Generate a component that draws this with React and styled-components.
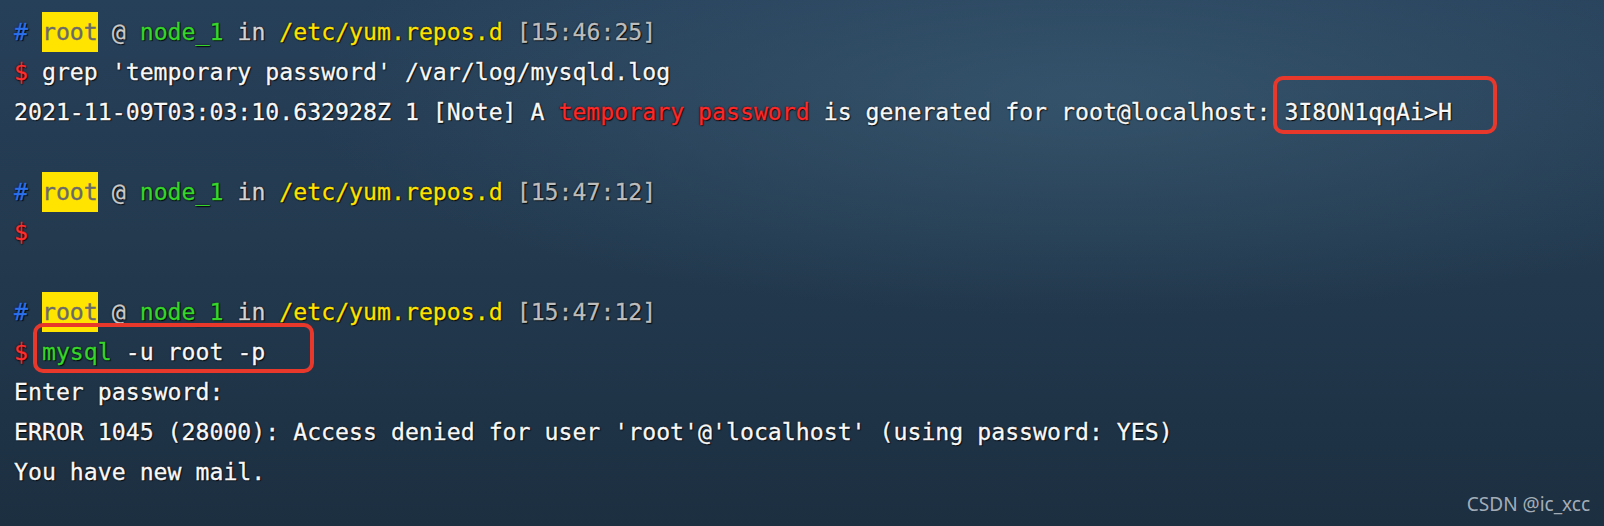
import styled, { createGlobalStyle } from "styled-components";

const Global = createGlobalStyle`
  html, body {
    margin: 0;
    padding: 0;
    background: #1e3245;
  }
`;

const Screen = styled.div`
  position: relative;
  width: 1604px;
  height: 526px;
  overflow: hidden;
  box-sizing: border-box;
  padding: 12px 0 0 14px;
  background:
    radial-gradient(ellipse 70% 60% at 68% 18%, rgba(64, 100, 124, 0.55), rgba(64, 100, 124, 0) 70%),
    linear-gradient(180deg, #27405a 0%, #233a4f 45%, #1c2f41 100%);
  font-family: "DejaVu Sans Mono", "Liberation Mono", monospace;
  font-size: 23.2px;
  color: #f8f8f8;
  text-shadow: 0 0 2px rgba(0, 0, 0, 0.95), 1px 1px 1px rgba(0, 0, 0, 0.85);
  -webkit-text-stroke: 0.3px currentColor;
`;

const Line = styled.div`
  height: 40px;
  line-height: 40px;
  white-space: pre;
`;

const C = styled.span`
  color: ${(p) => p.$c || "#f8f8f8"};
`;

const Hl = styled.span`
  display: inline-block;
  height: 40px;
  background: #ffe400;
  color: #6a6a6a;
  text-shadow: none;
`;

const Boxed = styled.span`
  position: relative;
  display: inline-block;
  &::after {
    content: "";
    position: absolute;
    left: ${(p) => p.$l}px;
    right: ${(p) => p.$r}px;
    top: ${(p) => p.$t}px;
    bottom: ${(p) => p.$b}px;
    border: 4px solid #e8382c;
    border-radius: 10px;
  }
`;

const Mark = styled.div`
  position: absolute;
  right: 14px;
  bottom: 9px;
  font-family: "Noto Sans", "Open Sans", sans-serif;
  font-size: 19px;
  color: rgba(200, 208, 216, 0.8);
  text-shadow: none;
  -webkit-text-stroke: 0;
`;

const Prompt = ({ time }) => (
  <Line>
    <C $c="#2a70ec">#</C> <Hl>root</Hl> <C $c="#cacaca">@</C>{" "}
    <C $c="#36d62b">node_1</C> <C $c="#d4d4d4">in</C>{" "}
    <C $c="#ffe200">/etc/yum.repos.d</C> <C $c="#bcbcbc">[{time}]</C>
  </Line>
);

const Dollar = () => <C $c="#ff2e2e">$</C>;

export default function App() {
  return (
    <>
      <Global />
      <Screen>
        <Prompt time="15:46:25" />
        <Line>
          <Dollar /> grep 'temporary password' /var/log/mysqld.log
        </Line>
        <Line>
          2021-11-09T03:03:10.632928Z 1 [Note] A{" "}
          <C $c="#ff2828">temporary password</C> is generated for root@localhost:{" "}
          <Boxed $l={-11} $r={-45} $t={-16} $b={-2}>3I8ON1qqAi&gt;H</Boxed>
        </Line>
        <Line />
        <Prompt time="15:47:12" />
        <Line>
          <Dollar />
        </Line>
        <Line />
        <Prompt time="15:47:12" />
        <Line>
          <Dollar />{" "}
          <Boxed $l={-9} $r={-49} $t={-9} $b={-1}>
            <C $c="#36d62b">mysql</C> -u root -p
          </Boxed>
        </Line>
        <Line>Enter password:</Line>
        <Line>
          ERROR 1045 (28000): Access denied for user 'root'@'localhost' (using password: YES)
        </Line>
        <Line>You have new mail.</Line>
        <Mark>CSDN @ic_xcc</Mark>
      </Screen>
    </>
  );
}
